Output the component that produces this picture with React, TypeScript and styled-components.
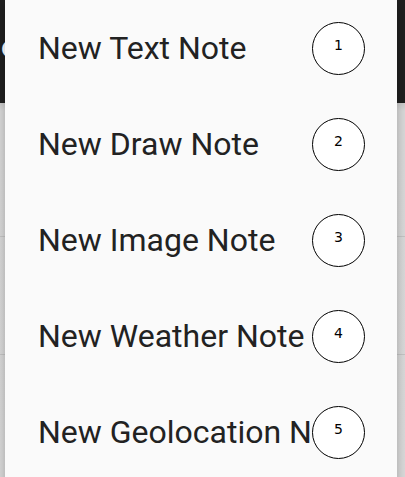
import React from "react";
import styled, { createGlobalStyle } from "styled-components";

const Global = createGlobalStyle`
  html, body { margin: 0; padding: 0; }
  body { width: 405px; height: 477px; overflow: hidden; font-family: Roboto, "Noto Sans", sans-serif; background: #d9d9d9; }
`;

const Screen = styled.div`
  position: relative;
  width: 405px;
  height: 477px;
  overflow: hidden;
  display: flex;
  flex-direction: column;
`;

const AppBar = styled.div`
  height: 103px;
  flex: none;
  background: #1f1f1f;
  display: flex;
  align-items: center;
  color: #fff;
  font-size: 30px;
  font-weight: 700;
`;

const Title = styled.span`
  margin-left: -20px;
  margin-top: -10px;
`;

const Body = styled.div`
  flex: 1;
  background: linear-gradient(#c8c8c8 0px, #d8d8d8 8px, #d9d9d9 100%);
  display: flex;
  flex-direction: column;
`;

const ListRow = styled.div<{ $h: number }>`
  height: ${(p) => p.$h}px;
  flex: none;
  border-bottom: 1px solid #c4c4c4;
  box-sizing: border-box;
`;

const Menu = styled.div`
  position: absolute;
  left: 5px;
  top: 0;
  width: 392px;
  height: 490px;
  background: #fafafa;
  box-shadow: 0 4px 10px rgba(0, 0, 0, 0.25);
  display: flex;
  flex-direction: column;
`;

const Item = styled.div`
  height: 96px;
  flex: none;
  display: flex;
  align-items: center;
  padding: 0 32px 0 33px;
`;

const Label = styled.div`
  flex: 1;
  min-width: 0;
  overflow: hidden;
  white-space: nowrap;
  font-family: Roboto, sans-serif;
  font-size: 32px;
  color: #222222;
  letter-spacing: 0;
`;

const Badge = styled.div`
  width: 53px;
  height: 53px;
  flex: none;
  box-sizing: border-box;
  border: 1px solid #000;
  border-radius: 50%;
  background: #fff;
  display: flex;
  align-items: center;
  justify-content: center;
  padding-bottom: 7px;
  font-family: "DejaVu Sans", sans-serif;
  font-size: 14px;
  color: #000;
`;

const items = [
  "New Text Note",
  "New Draw Note",
  "New Image Note",
  "New Weather Note",
  "New Geolocation Note",
];

export default function App() {
  return (
    <Screen>
      <Global />
      <AppBar>
        <Title>Note</Title>
      </AppBar>
      <Body>
        <ListRow $h={134} />
        <ListRow $h={118} />
        <ListRow $h={130} />
      </Body>
      <Menu>
        {items.map((t, i) => (
          <Item key={t}>
            <Label>{t}</Label>
            <Badge>{i + 1}</Badge>
          </Item>
        ))}
      </Menu>
    </Screen>
  );
}
